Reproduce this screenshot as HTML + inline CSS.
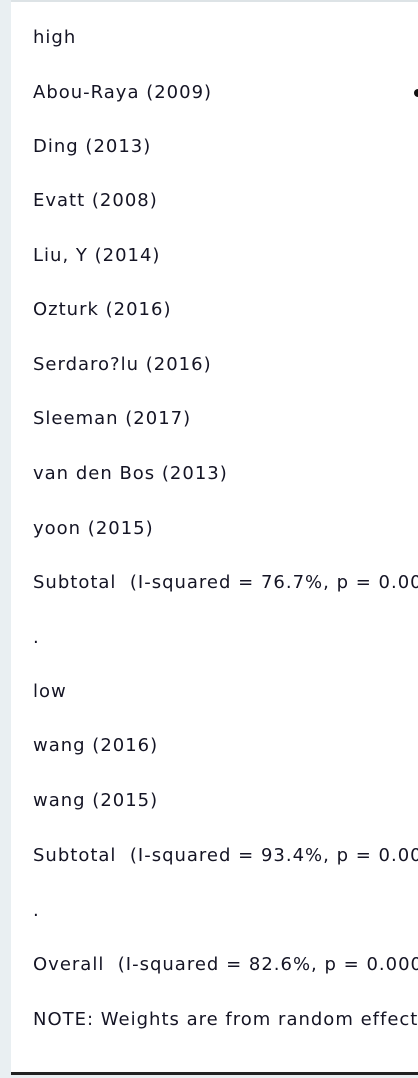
<!DOCTYPE html>
<html><head><meta charset="utf-8"><style>
html,body{margin:0;padding:0;width:418px;height:1078px;overflow:hidden;background:#fff;}
.strip{position:absolute;left:0;top:0;width:11px;height:1078px;background:#e9eff2;}
.top{position:absolute;left:11px;top:0;width:407px;height:2px;background:#dde3e6;}
.bot{position:absolute;left:11px;top:1072px;width:407px;height:3px;background:#222;}
.bot2{position:absolute;left:11px;top:1075px;width:407px;height:3px;background:#e9eff2;}
.wrap{position:absolute;left:0;top:0;width:418px;height:1070px;overflow:hidden;}
.t{position:absolute;left:33px;font-family:"DejaVu Sans","Liberation Sans",sans-serif;font-size:18px;color:#141424;white-space:pre;letter-spacing:1px;line-height:20px;}
.dot{position:absolute;left:414px;top:89px;width:8px;height:8px;border-radius:50%;background:#111;}
</style></head><body>
<div class="strip"></div><div class="top"></div><div class="bot"></div><div class="bot2"></div>
<div class="wrap">
<div class="dot"></div>
<div class="t" style="top:28px">high</div>
<div class="t" style="top:83px">Abou-Raya (2009)</div>
<div class="t" style="top:137px">Ding (2013)</div>
<div class="t" style="top:191px">Evatt (2008)</div>
<div class="t" style="top:246px">Liu, Y (2014)</div>
<div class="t" style="top:300px">Ozturk (2016)</div>
<div class="t" style="top:355px">Serdaro?lu (2016)</div>
<div class="t" style="top:409px">Sleeman (2017)</div>
<div class="t" style="top:464px">van den Bos (2013)</div>
<div class="t" style="top:519px">yoon (2015)</div>
<div class="t" style="top:573px">Subtotal  (I-squared = 76.7%, p = 0.000)</div>
<div class="t" style="top:628px">.</div>
<div class="t" style="top:682px">low</div>
<div class="t" style="top:736px">wang (2016)</div>
<div class="t" style="top:791px">wang (2015)</div>
<div class="t" style="top:846px">Subtotal  (I-squared = 93.4%, p = 0.000)</div>
<div class="t" style="top:901px">.</div>
<div class="t" style="top:955px">Overall  (I-squared = 82.6%, p = 0.000)</div>
<div class="t" style="top:1010px">NOTE: Weights are from random effects analysis</div>
</div>
</body></html>
